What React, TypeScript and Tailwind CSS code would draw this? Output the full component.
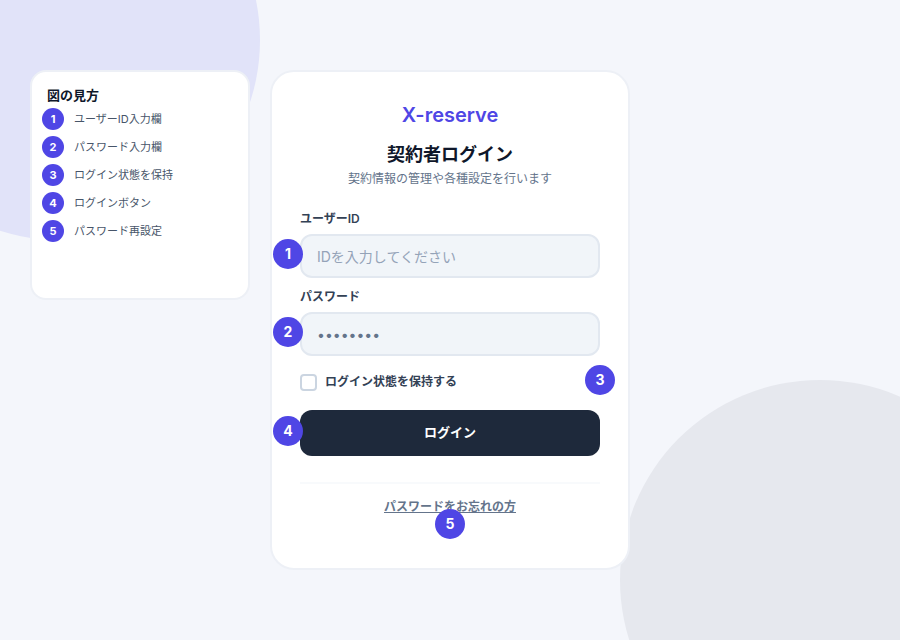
const font = "font-['Inter','Noto_Sans_CJK_JP',sans-serif]";

const legendItems = [
  { no: 1, label: 'ユーザーID入力欄' },
  { no: 2, label: 'パスワード入力欄' },
  { no: 3, label: 'ログイン状態を保持' },
  { no: 4, label: 'ログインボタン' },
  { no: 5, label: 'パスワード再設定' },
];

function Badge({ no, className }: { no: number; className: string }) {
  return (
    <div className={`absolute flex h-[30px] w-[30px] items-center justify-center rounded-full bg-[#4f46e5] text-sm font-bold text-white ${className}`}>
      {no}
    </div>
  );
}

export default function App() {
  return (
    <div className={`relative h-[640px] w-[900px] overflow-hidden bg-[#f4f6fb] ${font}`}>
      <div className="absolute left-[-140px] top-[-160px] h-[400px] w-[400px] rounded-full bg-[#e1e3f9]" />
      <div className="absolute left-[620px] top-[380px] h-[400px] w-[400px] rounded-full bg-[#e6e8ee]" />

      <div className="relative flex items-start gap-5 pl-[30px] pt-[70px]">
        <div className="h-[230px] w-[220px] rounded-2xl border-2 border-[#edf0f6] bg-white pl-[10px] pt-[13px]">
          <div className="pl-[5px] text-[13px] font-bold leading-[20px] text-[#0f172a]">図の見方</div>
          <div className="mt-[3px] flex flex-col gap-[6px]">
            {legendItems.map((item) => (
              <div key={item.no} className="flex items-center gap-[10px]">
                <div className="flex h-[22px] w-[22px] items-center justify-center rounded-full bg-[#4f46e5] text-[11px] font-bold text-white">
                  {item.no}
                </div>
                <span className="text-[11px] text-[#475569]">{item.label}</span>
              </div>
            ))}
          </div>
        </div>

        <div className="relative h-[500px] w-[360px] rounded-[24px] border-2 border-[#edf0f6] bg-white px-[28px] pt-[28px]">
          <div className="text-center text-xl font-semibold leading-[30px] text-[#4f46e5]">X-reserve</div>
          <h1 className="mt-[13px] text-center text-lg font-bold leading-[24px] text-[#0f172a]">契約者ログイン</h1>
          <p className="mt-[3px] text-center text-xs leading-[18px] text-[#64748b]">契約情報の管理や各種設定を行います</p>

          <label className="mt-[22px] block text-xs font-semibold leading-[18px] text-[#334155]">ユーザーID</label>
          <input
            placeholder="IDを入力してください"
            className="mt-[6px] block h-[44px] w-full rounded-xl border-2 border-[#e2e8f0] bg-[#f1f5f9] px-[15px] text-sm outline-none placeholder:text-[#94a3b8]"
          />

          <label className="mt-[10px] block text-xs font-semibold leading-[18px] text-[#334155]">パスワード</label>
          <input
            type="password"
            defaultValue="password"
            className="mt-[6px] block h-[44px] w-full rounded-xl border-2 border-[#e2e8f0] bg-[#f1f5f9] px-[15px] text-sm text-[#64748b] outline-none"
          />

          <label className="mt-[18px] flex h-[16px] items-center gap-2">
            <span className="h-[17px] w-[17px] rounded-[4px] border-2 border-[#cbd5e1] bg-white" />
            <span className="text-xs font-semibold text-[#334155]">ログイン状態を保持する</span>
          </label>

          <button className="mt-[20px] block h-[46px] w-full rounded-xl bg-[#1e293b] text-[13px] font-bold text-white">
            ログイン
          </button>

          <div className="mt-[26px] border-t-2 border-[#f8fafc] pt-[9px] text-center">
            <a className="text-xs font-semibold leading-[18px] text-[#64748b] underline">パスワードをお忘れの方</a>
          </div>

          <Badge no={1} className="left-[1px] top-[167px]" />
          <Badge no={2} className="left-[1px] top-[245px]" />
          <Badge no={3} className="left-[313px] top-[293px]" />
          <Badge no={4} className="left-[1px] top-[344px]" />
          <Badge no={5} className="left-[163px] top-[437px]" />
        </div>
      </div>
    </div>
  );
}
